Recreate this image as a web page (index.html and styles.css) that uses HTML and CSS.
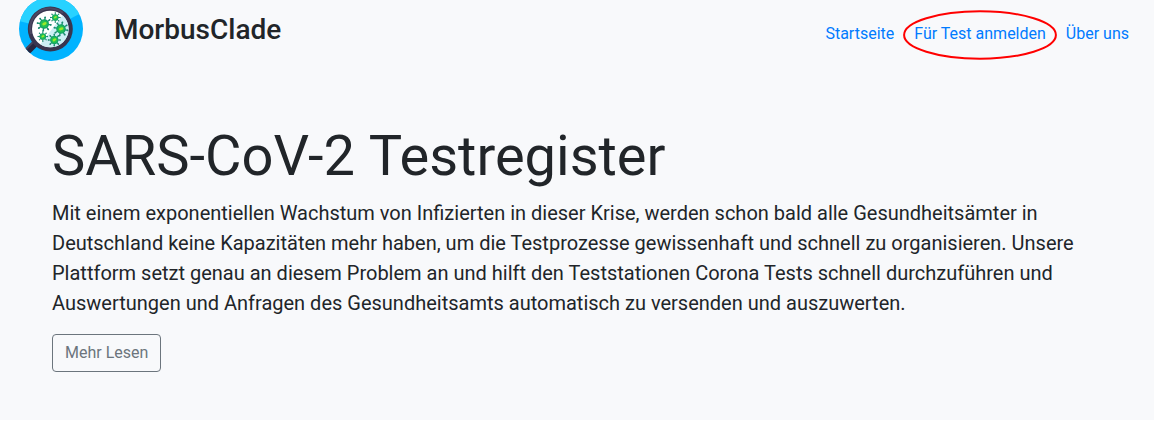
FILE: index.html
```html
<!DOCTYPE html>
<html lang="de">
<head>
<meta charset="utf-8">
<title>MorbusClade</title>
<link rel="stylesheet" href="styles.css">
</head>
<body>
<div class="page">
  <header class="header">
    <svg class="logo" viewBox="0 0 64 64" aria-hidden="true">
      <defs>
        <clipPath id="disc"><circle cx="32" cy="32" r="32"/></clipPath>
        <clipPath id="lens"><circle cx="31.3" cy="32" r="18.3"/></clipPath>
        <g id="virus">
          <path d="M0-7V7M-7 0H7M-4.9-4.9L4.9 4.9M4.9-4.9L-4.9 4.9" stroke="#1a8a70" stroke-width="1.3"/>
          <g fill="#1a8a70"><circle cy="-6.7" r=".9"/><circle cy="6.7" r=".9"/><circle cx="-6.7" r=".9"/><circle cx="6.7" r=".9"/><circle cx="-4.8" cy="-4.8" r=".9"/><circle cx="4.8" cy="4.8" r=".9"/><circle cx="4.8" cy="-4.8" r=".9"/><circle cx="-4.8" cy="4.8" r=".9"/></g>
          <circle r="4.8" fill="#13a565"/>
          <circle r="3.4" fill="#22c052"/>
          <ellipse cx=".3" cy="-.1" rx="2.3" ry="1.4" fill="#9be82a" transform="rotate(-35)"/>
        </g>
      </defs>
      <g clip-path="url(#disc)">
        <path fill="#00b3ff" d="M0 0h64v64H0z"/>
        <path fill="#28d2ff" d="M0 24L32 32 64 15V0H0z"/>
        <path d="M19 44L7 56" stroke="#28263f" stroke-width="6.5"/>
        <path d="M17 42L5 54" stroke="#45435b" stroke-width="2"/>
      </g>
      <circle cx="31.3" cy="32" r="22.5" fill="#38354f"/>
      <path d="M12 37A20 20 0 0 1 44 16" fill="none" stroke="#4b4862" stroke-width="2"/>
      <g clip-path="url(#lens)">
        <path fill="#fff" d="M10 10h44v44H10z"/>
        <path fill="#cceff5" d="M50 10L17 53h37z"/>
      </g>
      <use href="#virus" transform="translate(25.2 27) rotate(8)"/>
      <use href="#virus" transform="translate(36.3 20.5) scale(.7)"/>
      <use href="#virus" transform="translate(42 32) rotate(12)"/>
      <use href="#virus" transform="translate(23.8 39.5) scale(.7)"/>
      <use href="#virus" transform="translate(35.3 43) scale(.87)"/>
    </svg>
    <div class="brand">MorbusClade</div>
    <nav class="nav">
      <a>Startseite</a>
      <a class="marked">Für Test anmelden<svg class="ring" viewBox="0 0 154 50" aria-hidden="true"><ellipse cx="77" cy="25" rx="75.9" ry="23.7"/></svg></a>
      <a>Über uns</a>
    </nav>
  </header>
  <main class="hero">
    <h1 class="title">SARS-CoV-2 Testregister</h1>
    <p class="lead">Mit einem exponentiellen Wachstum von Infizierten in dieser Krise, werden schon bald alle Gesundheitsämter in Deutschland keine Kapazitäten mehr haben, um die Testprozesse gewissenhaft und schnell zu organisieren. Unsere Plattform setzt genau an diesem Problem an und hilft den Teststationen Corona Tests schnell durchzuführen und Auswertungen und Anfragen des Gesundheitsamts automatisch zu versenden und auszuwerten.</p>
    <button class="button">Mehr Lesen</button>
  </main>
</div>
</body>
</html>
```
FILE: styles.css
```css
* { box-sizing: border-box; }
body {
  margin: 0;
  background: #fff;
  color: #212529;
  font: 400 16px/1.5 Roboto, sans-serif;
  overflow: hidden;
}
.page {
  height: 420px;
  background: #f8f9fb;
}
.header {
  display: flex;
  align-items: flex-start;
  height: 75px;
  padding: 0 25px 0 19px;
}
.logo {
  width: 64px;
  height: 64px;
  margin-top: -3px;
}
.brand {
  margin: 13px auto 0 31px;
  font-size: 28px;
  font-weight: 500;
  line-height: 33.6px;
}
.nav {
  display: flex;
  gap: 20px;
  margin-top: 22px;
  color: #007bff;
}
.marked { position: relative; }
.ring {
  position: absolute;
  left: -11px;
  top: -12.5px;
  width: 154px;
  height: 50px;
  fill: none;
  stroke: #f00;
  stroke-width: 2;
}
.hero { padding: 48px 52px; }
.title {
  margin: 0 0 8px;
  font-size: 56px;
  font-weight: 400;
  line-height: 67px;
  word-spacing: 1px;
}
.lead {
  margin: 0 0 16px;
  font-size: 20px;
  line-height: 30px;
}
.button {
  display: block;
  height: 38px;
  padding: 6px 12px;
  border: 1px solid #6c757d;
  border-radius: 4px;
  background: transparent;
  color: #6c757d;
  font: inherit;
}
```
